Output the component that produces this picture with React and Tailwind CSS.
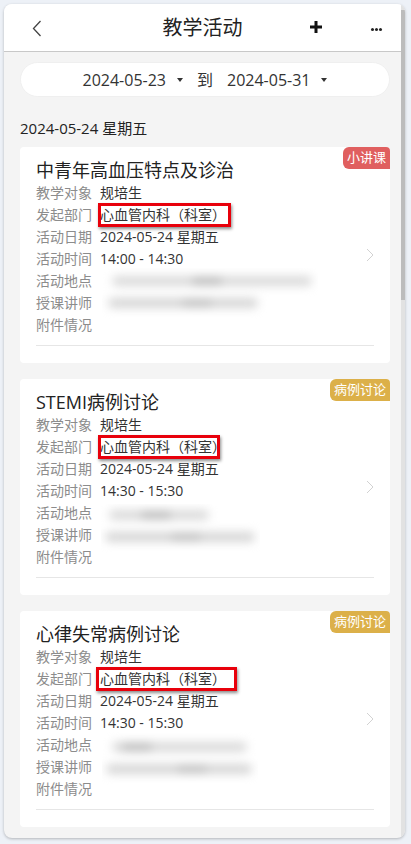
import React from "react";

const FONT = { fontFamily: '"Open Sans","Noto Sans CJK SC",sans-serif' };

function Row({ label, value, box }) {
  return (
    <div className="flex h-[22px] items-center text-[14px] leading-[22px]">
      <span className="w-[56px] shrink-0 text-[#8c8c8c]">{label}</span>
      <span className="relative ml-[8px] text-[#333]">
        {value}
        {box && (
          <span
            className={
              "pointer-events-none absolute border-[3px] border-[#e8000b] shadow-[1px_2px_3px_rgba(0,0,0,0.45)] " +
              box
            }
          />
        )}
      </span>
    </div>
  );
}

function Caret() {
  return (
    <svg width="6" height="4" viewBox="0 0 6 4" className="ml-[11px]">
      <path d="M0 0h6L3 4z" fill="#333" />
    </svg>
  );
}

function Card({ title, badge, badgeColor, time, box, blur }) {
  return (
    <div className="relative rounded-[4px] bg-white px-[16px] pb-[17px] pt-[11px]">
      <div
        className={
          "absolute right-0 top-0 flex h-[22px] items-center justify-center whitespace-nowrap rounded-bl-[6px] rounded-tl-[6px] rounded-tr-[4px] px-[4px] text-[13px] text-white " +
          badgeColor
        }
      >
        {badge}
      </div>
      <div className="text-[18px] leading-[24px] text-[#222]">{title}</div>
      <Row label="教学对象" value="规培生" />
      <Row label="发起部门" value="心血管内科（科室）" box={box} />
      <Row label="活动日期" value="2024-05-24 星期五" />
      <Row label="活动时间" value={time} />
      <Row label="活动地点" value="" />
      <Row label="授课讲师" value="" />
      <Row label="附件情况" value="" />
      <div className="mt-[9px] h-px bg-[#e6e6e6]" />
      <svg
        className="absolute right-[16px] top-1/2 -translate-y-1/2"
        width="8"
        height="14"
        viewBox="0 0 8 14"
        fill="none"
      >
        <path d="M1 1l6 6-6 6" stroke="#d2d2d2" strokeWidth="1" />
      </svg>
      <div className={"absolute overflow-hidden bg-white " + blur.pos}>
        <div className="h-full w-full blur-[5px]">
          <div className={"absolute h-[10px] rounded-full bg-[#dadada] " + blur.a} />
          <div className={"absolute h-[10px] rounded-full bg-[#d6d6d6] " + blur.b} />
          <div className={"absolute h-[8px] w-[30px] rounded-full bg-[#bdbdbd] " + blur.c} />
          <div className={"absolute h-[8px] w-[30px] rounded-full bg-[#c2c2c2] " + blur.d} />
        </div>
      </div>
    </div>
  );
}

export default function App() {
  return (
    <div
      className="h-[844px] w-[411px] overflow-hidden bg-[#edf1f7] pl-[4px] pt-[4px]"
      style={FONT}
    >
      <div className="flex h-[834px] w-[401px] overflow-hidden rounded-[8px] bg-[#f4f4f4] shadow-[0_1px_3px_rgba(0,0,0,0.25)]">
        <div className="flex min-w-0 flex-1 flex-col">
          <div className="relative flex h-[48px] shrink-0 items-center justify-center border-b border-[#c8c8c8] bg-white">
            <svg
              className="absolute left-[28px] top-[16px]"
              width="10"
              height="17"
              viewBox="0 0 10 17"
              fill="none"
            >
              <path d="M8.5 1L1.5 8.5l7 7.5" stroke="#444" strokeWidth="1.3" />
            </svg>
            <span className="text-[20px] text-[#222]">教学活动</span>
            <svg
              className="absolute left-[306px] top-[17px]"
              width="12"
              height="12"
              viewBox="0 0 12 12"
            >
              <path d="M6 0v12M0 6h12" stroke="#111" strokeWidth="3" />
            </svg>
            <div className="absolute left-[367px] top-[24px] flex gap-[1px]">
              <span className="h-[3px] w-[3px] rounded-full bg-[#222]" />
              <span className="h-[3px] w-[3px] rounded-full bg-[#222]" />
              <span className="h-[3px] w-[3px] rounded-full bg-[#222]" />
            </div>
          </div>

          <div className="flex flex-col pl-[16px] pr-[11px]">
            <div className="mt-[10px] flex h-[35px] items-center justify-center rounded-full border border-[#efefef] bg-white text-[16px] text-[#333]">
              <span>2024-05-23</span>
              <Caret />
              <span className="ml-[14px]">到</span>
              <span className="ml-[14px]">2024-05-31</span>
              <Caret />
            </div>

            <div className="mb-[9px] mt-[21px] text-[15px] leading-[20px] text-[#222]">
              2024-05-24 星期五
            </div>

            <div className="flex flex-col gap-[16px]">
              <Card
                title="中青年高血压特点及诊治"
                badge="小讲课"
                badgeColor="bg-[#e05f5f]"
                time="14:00 - 14:30"
                box="-left-[2px] -right-[5px] -top-[1px] -bottom-[1px]"
                blur={{
                  pos: "left-[82px] top-[121px] h-[52px] w-[216px]",
                  a: "left-[10px] top-[8px] w-[200px]",
                  b: "left-[6px] top-[30px] w-[150px]",
                  c: "left-[90px] top-[9px]",
                  d: "left-[80px] top-[31px]",
                }}
              />
              <Card
                title="STEMI病例讨论"
                badge="病例讨论"
                badgeColor="bg-[#dcb049]"
                time="14:30 - 15:30"
                box="-left-[2px] right-[6px] -top-[1px] -bottom-[1px]"
                blur={{
                  pos: "left-[81px] top-[125px] h-[49px] w-[159px]",
                  a: "left-[8px] top-[6px] w-[100px]",
                  b: "left-[4px] top-[28px] w-[150px]",
                  c: "left-[40px] top-[7px]",
                  d: "left-[70px] top-[29px]",
                }}
              />
              <Card
                title="心律失常病例讨论"
                badge="病例讨论"
                badgeColor="bg-[#dcb049]"
                time="14:30 - 15:30"
                box="-left-[4px] -right-[11px] -top-[1px] -bottom-[1px]"
                blur={{
                  pos: "left-[82px] top-[121px] h-[54px] w-[156px]",
                  a: "left-[10px] top-[10px] w-[135px]",
                  b: "left-[4px] top-[32px] w-[146px]",
                  c: "left-[20px] top-[11px]",
                  d: "left-[75px] top-[33px]",
                }}
              />
            </div>
          </div>
        </div>
        <div className="flex w-[4px] shrink-0 flex-col bg-[#e2e2e2]">
          <div className="mt-[6px] h-[290px] bg-[#bcbcbc]" />
        </div>
      </div>
    </div>
  );
}
